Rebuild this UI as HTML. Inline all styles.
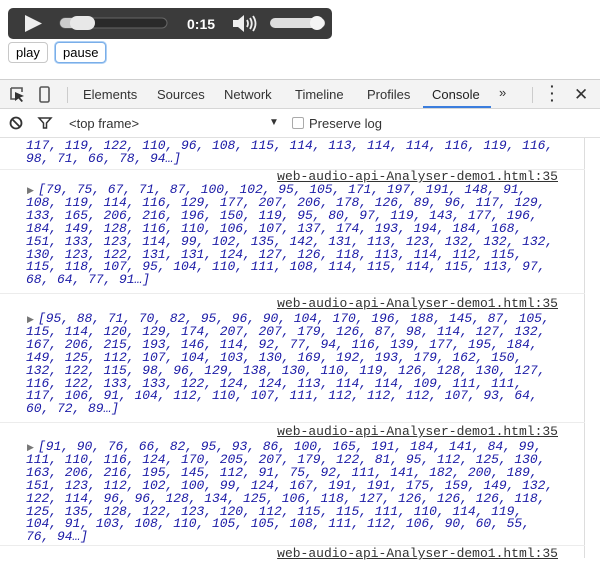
<!DOCTYPE html>
<html><head><style>
*{box-sizing:border-box}
body{margin:0;width:600px;height:555px;overflow:hidden;background:#fff;font-family:"Liberation Sans",sans-serif;position:relative}
.audio{position:absolute;left:8px;top:8px;width:324px;height:31px;background:#3b3b3b;border-radius:5px}
.btn{position:absolute;top:42px;height:21px;border:1px solid #c8c8c8;border-radius:4px;background:#fff;font-size:13px;line-height:19px;padding:0 7px;color:#000}
.dt{position:absolute;left:0;top:79px;width:600px;height:476px;border-top:1px solid #cfcfcf}
.tb{height:29px;background:#f3f3f3;border-bottom:1px solid #d6d6d6;position:relative;font-size:13px;color:#333}
.tb span{position:absolute;top:7px}
.fb{height:29px;border-bottom:1px solid #e0e0e0;position:relative;font-size:13px;color:#333;background:#fff}
.con{position:absolute;left:0;top:58px;width:585px;border-right:1px solid #ddd;height:420px;font-family:"Liberation Mono",monospace;font-size:13px;line-height:12.9px;color:#1a1aa6}
.l{position:absolute;left:26px;font-style:italic;white-space:pre;letter-spacing:-0.05px}
.f{text-indent:12px}
.src{position:absolute;right:26px;color:#333;text-decoration:underline;font-style:normal;white-space:pre}
.sep{position:absolute;left:0;width:585px;border-top:1px solid #ececec}
.tri{position:absolute;left:27px;color:#777;font-size:9px;font-style:normal;margin-top:1px}
</style></head><body>
<div class="audio">
<svg width="324" height="31" style="position:absolute;left:0;top:0">
<polygon points="17,7 17,24 34,15.5" fill="#eee"/>
<rect x="52" y="10" width="107" height="10" rx="5" fill="#2a2a2a" stroke="#666" stroke-width="1"/>
<rect x="52" y="10" width="22" height="10" rx="5" fill="#ccc"/>
<rect x="62" y="8" width="25" height="14" rx="7" fill="#e8e8e8"/>
<text x="179" y="21" font-family="Liberation Sans" font-weight="bold" font-size="14" fill="#fff">0:15</text>
<polygon points="225,12 230,12 236,7 236,24 230,19 225,19" fill="#eee"/>
<path d="M239,12 q2,3.5 0,7 M242,10 q3.5,5.5 0,11 M245,8 q5,7.5 0,15" stroke="#eee" stroke-width="1.8" fill="none"/>
<rect x="262" y="10" width="55" height="10" rx="5" fill="#ddd"/>
<circle cx="309" cy="15" r="7" fill="#f4f4f4"/>
</svg>
</div>
<div class="btn" style="left:8px">play</div>
<div class="btn" style="left:55px;border-color:#7aaee8;box-shadow:0 0 0 1px #aed0f5">pause</div>
<div class="dt">
<div class="tb">
<svg width="60" height="29" style="position:absolute;left:0;top:0">
<path d="M11,8 h11 v4 M11,8 v11 h4" stroke="#555" stroke-width="1.6" fill="none"/>
<polygon points="15,12 24,16 20,17.5 23,21 21.5,22 18.5,18.5 15,21" fill="#333"/>
<rect x="40" y="7" width="9" height="15" rx="1.5" stroke="#555" stroke-width="1.6" fill="none"/>
</svg>
<div style="position:absolute;left:67px;top:7px;width:1px;height:16px;background:#ccc"></div>
<span style="left:83px">Elements</span><span style="left:157px">Sources</span><span style="left:224px">Network</span><span style="left:295px">Timeline</span><span style="left:367px">Profiles</span><span style="left:432px;color:#222">Console</span>
<div style="position:absolute;left:423px;top:26px;width:68px;height:2px;background:#3b7ddd"></div>
<span style="left:499px;top:5px">»</span>
<div style="position:absolute;left:532px;top:7px;width:1px;height:16px;background:#ccc"></div>
<span style="left:550px;top:3px;font-weight:bold;line-height:7px;font-size:14px">·<br>·<br>·</span>
<span style="left:574px;top:5px;font-size:17px">✕</span>
</div>
<div class="fb">
<svg width="60" height="29" style="position:absolute;left:0;top:0">
<circle cx="16" cy="14" r="5.5" stroke="#333" stroke-width="1.8" fill="none"/><path d="M12,10 L20,18" stroke="#333" stroke-width="1.8"/>
<path d="M39,9 h12 l-4.5,5 v5 h-3 v-5 z" stroke="#333" stroke-width="1.5" fill="none"/>
</svg>
<span style="position:absolute;left:69px;top:7px">&lt;top frame&gt;</span>
<span style="position:absolute;left:269px;top:8px;font-size:10px">▼</span>
<span style="position:absolute;left:292px;top:8px;width:12px;height:12px;border:1px solid #aaa;border-radius:2px"></span>
<span style="position:absolute;left:309px;top:7px">Preserve log</span>
</div>
<div class="con">
<div class="l" style="top:2px">117, 119, 122, 110, 96, 108, 115, 114, 113, 114, 114, 116, 119, 116,
98, 71, 66, 78, 94…]</div>
<div class="sep" style="top:31px"></div>
<div class="src" style="top:33px">web-audio-api-Analyser-demo1.html:35</div>
<div class="tri" style="top:46px">▶</div>
<div class="l f" style="top:46px">[79, 75, 67, 71, 87, 100, 102, 95, 105, 171, 197, 191, 148, 91,
108, 119, 114, 116, 129, 177, 207, 206, 178, 126, 89, 96, 117, 129,
133, 165, 206, 216, 196, 150, 119, 95, 80, 97, 119, 143, 177, 196,
184, 149, 128, 116, 110, 106, 107, 137, 174, 193, 194, 184, 168,
151, 133, 123, 114, 99, 102, 135, 142, 131, 113, 123, 132, 132, 132,
130, 123, 122, 131, 131, 124, 127, 126, 118, 113, 114, 112, 115,
115, 118, 107, 95, 104, 110, 111, 108, 114, 115, 114, 115, 113, 97,
68, 64, 77, 91…]</div>
<div class="sep" style="top:155px"></div>
<div class="src" style="top:160px">web-audio-api-Analyser-demo1.html:35</div>
<div class="tri" style="top:175px">▶</div>
<div class="l f" style="top:175px">[95, 88, 71, 70, 82, 95, 96, 90, 104, 170, 196, 188, 145, 87, 105,
115, 114, 120, 129, 174, 207, 207, 179, 126, 87, 98, 114, 127, 132,
167, 206, 215, 193, 146, 114, 92, 77, 94, 116, 139, 177, 195, 184,
149, 125, 112, 107, 104, 103, 130, 169, 192, 193, 179, 162, 150,
132, 122, 115, 98, 96, 129, 138, 130, 110, 119, 126, 128, 130, 127,
116, 122, 133, 133, 122, 124, 124, 113, 114, 114, 109, 111, 111,
117, 106, 91, 104, 112, 110, 107, 111, 112, 112, 112, 107, 93, 64,
60, 72, 89…]</div>
<div class="sep" style="top:284px"></div>
<div class="src" style="top:288px">web-audio-api-Analyser-demo1.html:35</div>
<div class="tri" style="top:303px">▶</div>
<div class="l f" style="top:303px">[91, 90, 76, 66, 82, 95, 93, 86, 100, 165, 191, 184, 141, 84, 99,
111, 110, 116, 124, 170, 205, 207, 179, 122, 81, 95, 112, 125, 130,
163, 206, 216, 195, 145, 112, 91, 75, 92, 111, 141, 182, 200, 189,
151, 123, 112, 102, 100, 99, 124, 167, 191, 191, 175, 159, 149, 132,
122, 114, 96, 96, 128, 134, 125, 106, 118, 127, 126, 126, 126, 118,
125, 135, 128, 122, 123, 120, 112, 115, 115, 111, 110, 114, 119,
104, 91, 103, 108, 110, 105, 105, 108, 111, 112, 106, 90, 60, 55,
76, 94…]</div>
<div class="sep" style="top:407px"></div>
<div class="src" style="top:410px">web-audio-api-Analyser-demo1.html:35</div>
</div>
</div>
</body></html>
